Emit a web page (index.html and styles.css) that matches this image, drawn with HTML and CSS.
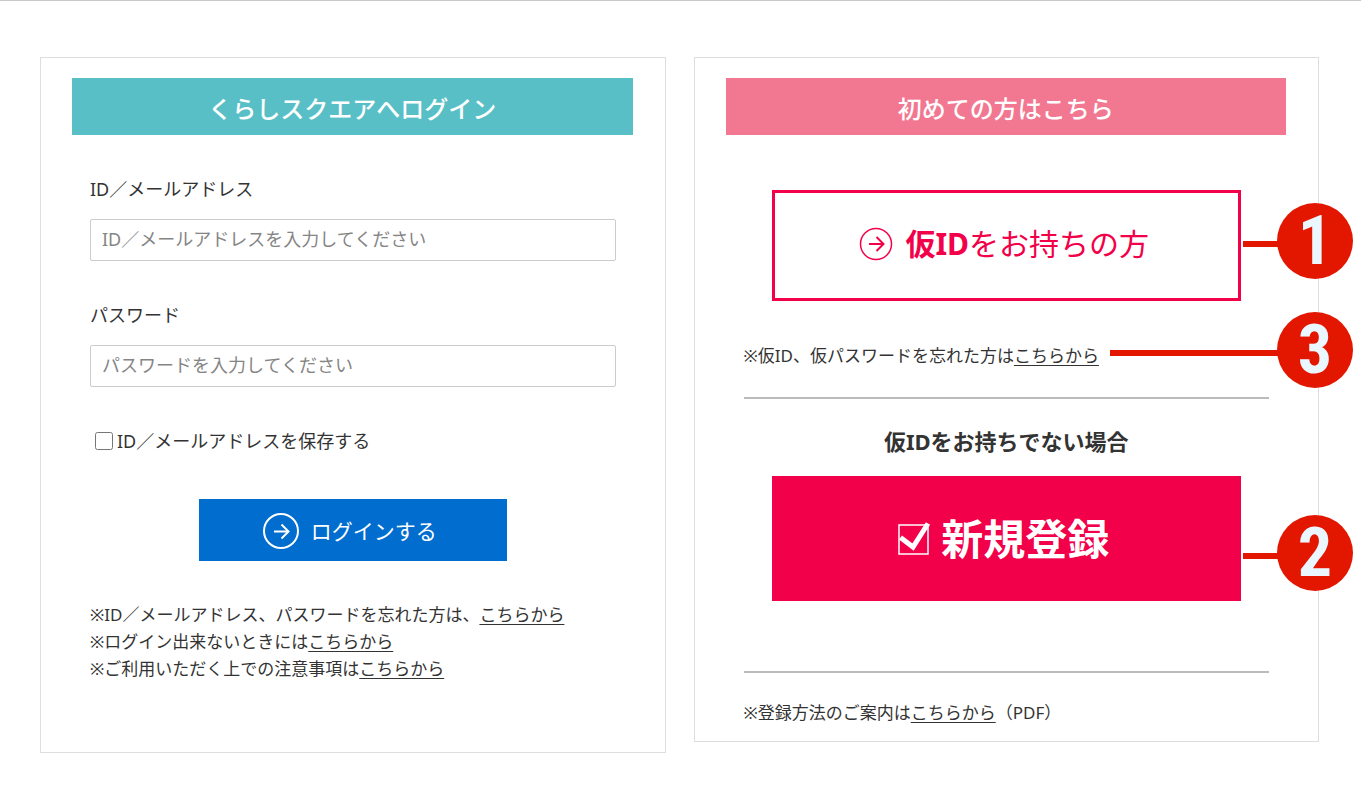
FILE: index.html
```html
<!DOCTYPE html>
<html lang="ja">
<head>
<meta charset="UTF-8">
<meta name="viewport" content="width=device-width, initial-scale=1.0">
<title>くらしスクエア ログイン</title>
<link rel="stylesheet" href="styles.css">
</head>
<body>
  <main class="columns">

    <!-- ログイン -->
    <section class="card card-login">
      <h2 class="card-title title-login">くらしスクエアへログイン</h2>
      <form class="card-body login-form">
        <label class="field-label" for="loginId">ID／メールアドレス</label>
        <input class="field" type="text" id="loginId" placeholder="ID／メールアドレスを入力してください">

        <label class="field-label" for="password">パスワード</label>
        <input class="field" type="password" id="password" placeholder="パスワードを入力してください">

        <div class="save-row">
          <input type="checkbox" id="saveId">
          <label for="saveId">ID／メールアドレスを保存する</label>
        </div>

        <button class="login-button" type="submit">
          <svg width="36" height="36" viewBox="0 0 36 36" fill="none" stroke="currentColor" stroke-width="2">
            <circle cx="18" cy="18" r="17"/>
            <path d="M11 18.500h14M18.500 11.500l7 7-7 7"/>
          </svg>
          ログインする
        </button>

        <div class="notes">
          <p>※ID／メールアドレス、パスワードを忘れた方は、<a href="#">こちらから</a></p>
          <p>※ログイン出来ないときには<a href="#">こちらから</a></p>
          <p>※ご利用いただく上での注意事項は<a href="#">こちらから</a></p>
        </div>
      </form>
    </section>

    <!-- 新規登録 -->
    <section class="card card-register">
      <h2 class="card-title title-register">初めての方はこちら</h2>
      <div class="card-body register-body">
        <a class="temp-button" href="#">
          <svg width="34" height="34" viewBox="0 0 34 34" fill="none" stroke="currentColor">
            <circle cx="17" cy="17" r="15.500" stroke-width="1.500"/>
            <path d="M10 17h14M17.500 10l7 7-7 7" stroke-width="2"/>
          </svg>
          <span><b>仮ID</b>をお持ちの方</span>
        </a>
        <p class="note-forgot">※仮ID、仮パスワードを忘れた方は<a href="#">こちらから</a></p>
        <hr>
        <h3 class="sub-title">仮IDをお持ちでない場合</h3>
        <a class="new-button" href="#">
          <svg width="34" height="36" viewBox="0 0 34 36" fill="none" stroke="currentColor">
            <rect x="2" y="4" width="29" height="29" stroke-width="1.500"/>
            <path d="M3.500 16.500L16 26 31 2.500" stroke-width="5"/>
          </svg>
          新規登録
        </a>
        <hr class="line-bottom">
        <p class="note-guide">※登録方法のご案内は<a href="#">こちらから</a>（PDF）</p>
      </div>

      <div class="marker marker-1"><span class="marker-line"></span><span class="marker-num">1</span></div>
      <div class="marker marker-3"><span class="marker-line"></span><span class="marker-num">3</span></div>
      <div class="marker marker-2"><span class="marker-line"></span><span class="marker-num">2</span></div>
    </section>

  </main>
</body>
</html>
```

FILE: styles.css
```css
* {
  box-sizing: border-box;
}
body {
  margin: 0;
  border-top: 1px solid #c6c9cc;
  background: #fff;
  color: #333;
  font-family: "Noto Sans", "Noto Sans CJK JP", sans-serif;
  font-size: 18px;
  line-height: 24px;
}
h2, h3, p {
  margin: 0;
}
.columns {
  display: grid;
  grid-template-columns: 1fr 1fr;
  align-items: start;
  gap: 28px;
  padding: 56px 42px 40px 40px;
}
.card {
  position: relative;
  padding: 20px 32px 0 31px;
  border: 1px solid #dedede;
}
.card-title {
  height: 57px;
  color: #fff;
  font-size: 24px;
  font-weight: 500;
  line-height: 62px;
  text-align: center;
}
.title-login {
  background: #59bfc7;
}
.title-register {
  background: #f27892;
}
.card-body {
  display: flex;
  flex-direction: column;
  padding: 0 17px 0 18px;
}

/* login */
.login-form {
  padding-bottom: 70px;
}
.field-label {
  margin: 42px 0 18px;
}
.field {
  width: 100%;
  height: 42px;
  padding: 0 11px 2px;
  border: 1px solid #ccc;
  border-radius: 2px;
  color: #333;
  font: inherit;
}
.field::placeholder {
  color: #858585;
}
.save-row {
  display: flex;
  align-items: center;
  gap: 4px;
  margin: 42px 0 46px;
}
.save-row input {
  width: 18px;
  height: 18px;
  margin: 0 0 0 5px;
}
.login-button {
  display: flex;
  align-self: center;
  align-items: center;
  gap: 12px;
  height: 62px;
  padding: 2px 70px 0 64px;
  border: none;
  background: #006dcf;
  color: #fff;
  font: inherit;
  font-size: 21px;
  cursor: pointer;
}
.notes {
  margin-top: 40px;
}
.notes, .note-forgot, .note-guide {
  font-size: 17px;
  line-height: 27px;
}
p a {
  color: inherit;
  text-underline-offset: 3px;
}

/* register */
.register-body {
  padding-bottom: 15px;
}
.temp-button, .new-button {
  display: flex;
  align-items: center;
  justify-content: center;
  margin: 0 28px;
  text-decoration: none;
}
.temp-button {
  gap: 12px;
  height: 111px;
  margin-top: 55px;
  padding: 0 4px 4px 0;
  border: 3px solid #f20049;
  color: #f20049;
  font-size: 30px;
}
.new-button {
  gap: 10px;
  height: 125px;
  padding-right: 6px;
  background: #f20049;
  color: #fff;
  font-size: 42px;
  font-weight: bold;
}
.note-forgot {
  margin-top: 41px;
}
hr {
  width: 100%;
  height: 2px;
  margin: 28px 0;
  border: none;
  background: #bbb;
}
.sub-title {
  margin-bottom: 21px;
  font-size: 22px;
  line-height: 28px;
  text-align: center;
}
.line-bottom {
  margin: 70px 0 26px;
}

/* numbered markers */
.marker {
  position: absolute;
  right: -35px;
  display: flex;
  align-items: center;
}
.marker-1 {
  top: 145px;
}
.marker-3 {
  top: 254px;
}
.marker-2 {
  top: 457px;
}
.marker-line {
  width: 36px;
  height: 6px;
  margin: 6px -2px 0 0;
  background: #e31700;
}
.marker-3 .marker-line {
  width: 169px;
}
.marker-num {
  width: 76px;
  height: 76px;
  border-radius: 50%;
  background: #e31700;
  color: #ebf7fe;
  font-family: "Liberation Sans Narrow", "Roboto Condensed", "Open Sans Condensed", "DejaVu Sans Condensed", sans-serif;
  font-size: 68px;
  font-weight: bold;
  line-height: 76px;
  text-align: center;
}
```
